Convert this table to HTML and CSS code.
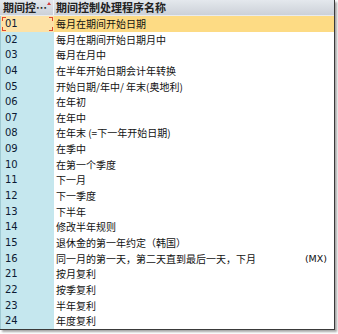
FILE: index.html
```html
<!DOCTYPE html>
<html>
<head>
<meta charset="utf-8">
<link rel="stylesheet" href="styles.css">
</head>
<body>
<div class="frame">
  <div class="head">
    <div class="h1">期间控…<span class="sort"></span></div>
    <div class="h2">期间控制处理程序名称</div>
  </div>
  <div class="row sel"><div class="c1"><span class="focus"></span>01</div><div class="c2">每月在期间开始日期</div></div>
  <div class="row"><div class="c1">02</div><div class="c2">每月在期间开始日期月中</div></div>
  <div class="row"><div class="c1">03</div><div class="c2">每月在月中</div></div>
  <div class="row"><div class="c1">04</div><div class="c2">在半年开始日期会计年转换</div></div>
  <div class="row"><div class="c1">05</div><div class="c2">开始日期/年中/ 年末(奥地利)</div></div>
  <div class="row"><div class="c1">06</div><div class="c2">在年初</div></div>
  <div class="row"><div class="c1">07</div><div class="c2">在年中</div></div>
  <div class="row"><div class="c1">08</div><div class="c2">在年末 (=下一年开始日期)</div></div>
  <div class="row"><div class="c1">09</div><div class="c2">在季中</div></div>
  <div class="row"><div class="c1">10</div><div class="c2">在第一个季度</div></div>
  <div class="row"><div class="c1">11</div><div class="c2">下一月</div></div>
  <div class="row"><div class="c1">12</div><div class="c2">下一季度</div></div>
  <div class="row"><div class="c1">13</div><div class="c2">下半年</div></div>
  <div class="row"><div class="c1">14</div><div class="c2">修改半年规则</div></div>
  <div class="row"><div class="c1">15</div><div class="c2">退休金的第一年约定（韩国）</div></div>
  <div class="row"><div class="c1">16</div><div class="c2 split"><span>同一月的第一天，第二天直到最后一天，下月</span><span class="mx">(MX)</span></div></div>
  <div class="row"><div class="c1">21</div><div class="c2">按月复利</div></div>
  <div class="row"><div class="c1">22</div><div class="c2">按季复利</div></div>
  <div class="row"><div class="c1">23</div><div class="c2">半年复利</div></div>
  <div class="row"><div class="c1">24</div><div class="c2">年度复利</div></div>
</div>
</body>
</html>
```
FILE: styles.css
```css
html, body {
  margin: 0;
  padding: 0;
  background: #fff;
}
body {
  width: 338px;
  height: 334px;
  overflow: hidden;
}
.frame {
  width: 334px;
  height: 329px;
  border-right: 1px solid #3a3a3a;
  border-bottom: 1px solid #3a3a3a;
  box-shadow: 2px 2px 2px rgba(0,0,0,0.35);
  background: #fff;
  display: flex;
  flex-direction: column;
  overflow: hidden;
  font-family: "Noto Sans CJK SC", sans-serif;
  font-size: 10px;
  color: #111;
}
.head {
  display: flex;
  height: 16px;
  flex: none;
  background: linear-gradient(#e4e8ed, #ccd1d8);
  border-bottom: 1px solid #e8ebef;
  box-sizing: border-box;
  font-weight: bold;
  font-size: 11px;
  line-height: 15px;
  color: #222;
}
.h1 {
  width: 54px;
  box-sizing: border-box;
  padding-left: 3px;
  border-right: 1px solid #f2f4f6;
  position: relative;
  white-space: nowrap;
  overflow: hidden;
}
.sort {
  position: absolute;
  left: 47px;
  top: 2px;
  width: 0;
  height: 0;
  border-left: 2.5px solid transparent;
  border-right: 2.5px solid transparent;
  border-bottom: 3px solid #d23a3a;
}
.h2 {
  flex: 1;
  padding-left: 2px;
  white-space: nowrap;
}
.row {
  display: flex;
  height: 15.65px;
  flex: none;
  line-height: 15.65px;
}
.c1 {
  width: 54px;
  flex: none;
  box-sizing: border-box;
  padding-left: 4px;
  background: #c5e7ee;
  border-left: 1px solid #9fc9d3;
  font-family: "DejaVu Sans", sans-serif;
  font-size: 10px;
  color: #0d1a33;
  position: relative;
}
.c2 {
  flex: 1;
  padding-left: 2px;
  padding-right: 7px;
  white-space: nowrap;
}
.split {
  display: flex;
  justify-content: space-between;
}
.mx {
  font-family: "DejaVu Sans", sans-serif;
  font-size: 9.5px;
}
.sel .c1 {
  background: #fde2a6;
}
.sel .c2 {
  background: #fddb84;
}
.focus {
  position: absolute;
  left: 1px;
  width: 51px;
  top: 1px;
  height: 14px;
  background:
    linear-gradient(#e0482e, #e0482e) 0 0 / 4px 1px no-repeat,
    linear-gradient(#e0482e, #e0482e) 0 0 / 1px 4px no-repeat,
    linear-gradient(#e0482e, #e0482e) 100% 0 / 4px 1px no-repeat,
    linear-gradient(#e0482e, #e0482e) 100% 0 / 1px 4px no-repeat,
    linear-gradient(#e0482e, #e0482e) 0 100% / 4px 1px no-repeat,
    linear-gradient(#e0482e, #e0482e) 0 100% / 1px 4px no-repeat,
    linear-gradient(#e0482e, #e0482e) 100% 100% / 4px 1px no-repeat,
    linear-gradient(#e0482e, #e0482e) 100% 100% / 1px 4px no-repeat;
}
```
